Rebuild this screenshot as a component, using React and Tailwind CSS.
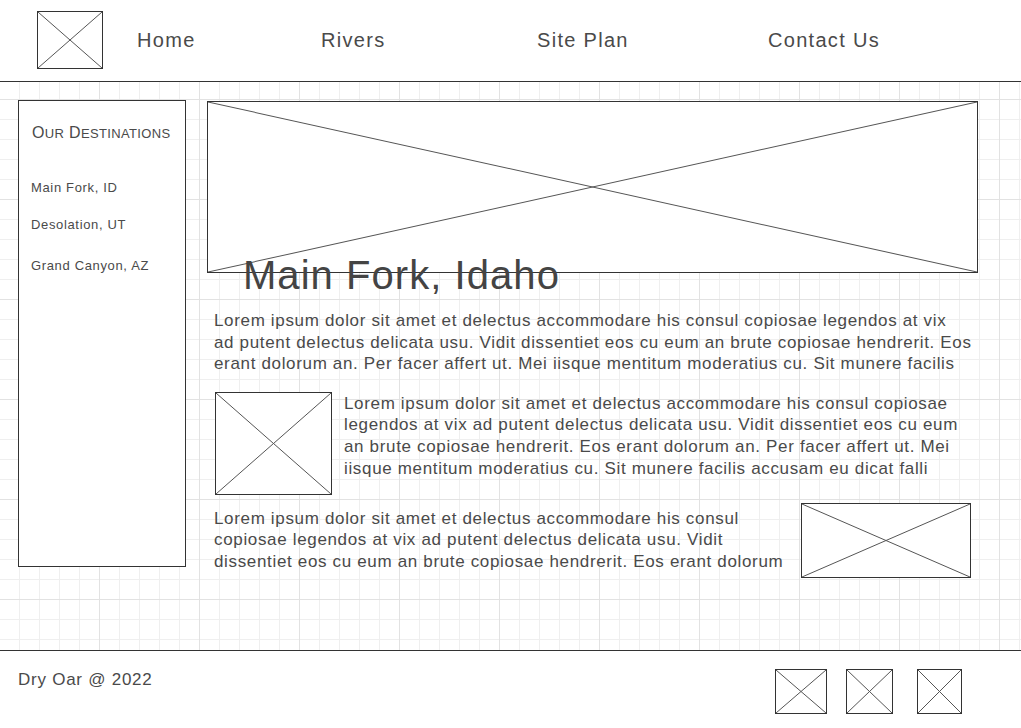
import React from 'react';

const NAV = [
  { label: 'Home', cls: 'w-[184px]' },
  { label: 'Rivers', cls: 'w-[216px]' },
  { label: 'Site Plan', cls: 'w-[231px]' },
  { label: 'Contact Us', cls: '' },
];

const DESTINATIONS = [
  { name: 'Main Fork, ID', cls: 'mt-[40px]' },
  { name: 'Desolation, UT', cls: 'mt-[24px]' },
  { name: 'Grand Canyon, AZ', cls: 'mt-[28px]' },
];

const P1 = [
  'Lorem ipsum dolor sit amet et delectus accommodare his consul copiosae legendos at vix',
  'ad putent delectus delicata usu. Vidit dissentiet eos cu eum an brute copiosae hendrerit. Eos',
  'erant dolorum an. Per facer affert ut. Mei iisque mentitum moderatius cu. Sit munere facilis',
];

const P2 = [
  'Lorem ipsum dolor sit amet et delectus accommodare his consul copiosae',
  'legendos at vix ad putent delectus delicata usu. Vidit dissentiet eos cu eum',
  'an brute copiosae hendrerit. Eos erant dolorum an. Per facer affert ut. Mei',
  'iisque mentitum moderatius cu. Sit munere facilis accusam eu dicat falli',
];

const P3 = [
  'Lorem ipsum dolor sit amet et delectus accommodare his consul',
  'copiosae legendos at vix ad putent delectus delicata usu. Vidit',
  'dissentiet eos cu eum an brute copiosae hendrerit. Eos erant dolorum',
];

// wireframe image placeholder: box with a cross
function Placeholder({ className = '' }) {
  return (
    <div className={`border border-[#333] bg-white shrink-0 ${className}`}>
      <svg className="block w-full h-full" viewBox="0 0 100 100" preserveAspectRatio="none">
        <line x1="0" y1="0" x2="100" y2="100" stroke="#555" strokeWidth="1" vectorEffect="non-scaling-stroke" />
        <line x1="100" y1="0" x2="0" y2="100" stroke="#555" strokeWidth="1" vectorEffect="non-scaling-stroke" />
      </svg>
    </div>
  );
}

function Lines({ lines, className = '' }) {
  return (
    <div className={`text-[17px] leading-[21.6px] tracking-[0.66px] ${className}`}>
      {lines.map((l) => (
        <div key={l} className="whitespace-nowrap">{l}</div>
      ))}
    </div>
  );
}

export default function App() {
  return (
    <div className="h-[728px] w-[1021px] flex flex-col bg-white text-[#4a4a4a] overflow-hidden font-['Liberation_Sans',Arial,sans-serif]">
      {/* Header */}
      <header className="h-[82px] shrink-0 border-b border-[#333] flex items-start">
        <Placeholder className="ml-[37px] mt-[11px] w-[66px] h-[58px]" />
        <nav className="ml-[34px] mt-[30px] flex">
          {NAV.map((n) => (
            <span key={n.label} className={`text-[20px] leading-none tracking-[1.3px] ${n.cls}`}>{n.label}</span>
          ))}
        </nav>
      </header>

      {/* Main on grid */}
      <main className="flex-1 flex items-start bg-[image:linear-gradient(to_right,#e2e2e2_1px,transparent_1px),linear-gradient(to_bottom,#e2e2e2_1px,transparent_1px),linear-gradient(to_right,#efefef_1px,transparent_1px),linear-gradient(to_bottom,#efefef_1px,transparent_1px)] bg-[size:100px_100px,100px_100px,20px_20px,20px_20px] bg-[position:99px_17px,99px_17px,19px_17px,19px_17px]">
        {/* Sidebar */}
        <aside className="ml-[18px] mt-[18px] w-[168px] h-[467px] border border-[#333] bg-white shrink-0 pl-[12px]">
          <div className="mt-[24px] pl-[1px] text-[16px] leading-none uppercase tracking-[0.35px]">
            O<span className="text-[13px]">ur</span> D<span className="text-[13px]">estinations</span>
          </div>
          {DESTINATIONS.map((d) => (
            <div key={d.name} className={`text-[13px] leading-none tracking-[0.65px] ${d.cls}`}>{d.name}</div>
          ))}
        </aside>

        {/* Content */}
        <section className="ml-[21px] mt-[19px] flex flex-col">
          <Placeholder className="w-[771px] h-[172px]" />
          <h1 className="relative ml-[36px] mt-[-18px] text-[40px] leading-none tracking-[1.05px] text-[#444]">Main Fork, Idaho</h1>
          <Lines lines={P1} className="ml-[7px] mt-[15px]" />

          <div className="flex items-start ml-[8px] mt-[17px]">
            <Placeholder className="w-[117px] h-[103px]" />
            <Lines lines={P2} className="ml-[12px] mt-[1px]" />
          </div>

          <div className="flex items-start ml-[7px] mt-[8px]">
            <Lines lines={P3} className="mt-[5px] w-[587px]" />
            <Placeholder className="w-[170px] h-[75px]" />
          </div>
        </section>
      </main>

      {/* Footer */}
      <footer className="h-[78px] shrink-0 border-t border-[#333] flex items-start">
        <span className="ml-[18px] mt-[20px] text-[17px] leading-none tracking-[0.75px]">Dry Oar @ 2022</span>
        <div className="ml-auto mr-[59px] mt-[18px] flex">
          <Placeholder className="w-[52px] h-[45px]" />
          <Placeholder className="ml-[19px] w-[47px] h-[45px]" />
          <Placeholder className="ml-[24px] w-[45px] h-[45px]" />
        </div>
      </footer>
    </div>
  );
}
